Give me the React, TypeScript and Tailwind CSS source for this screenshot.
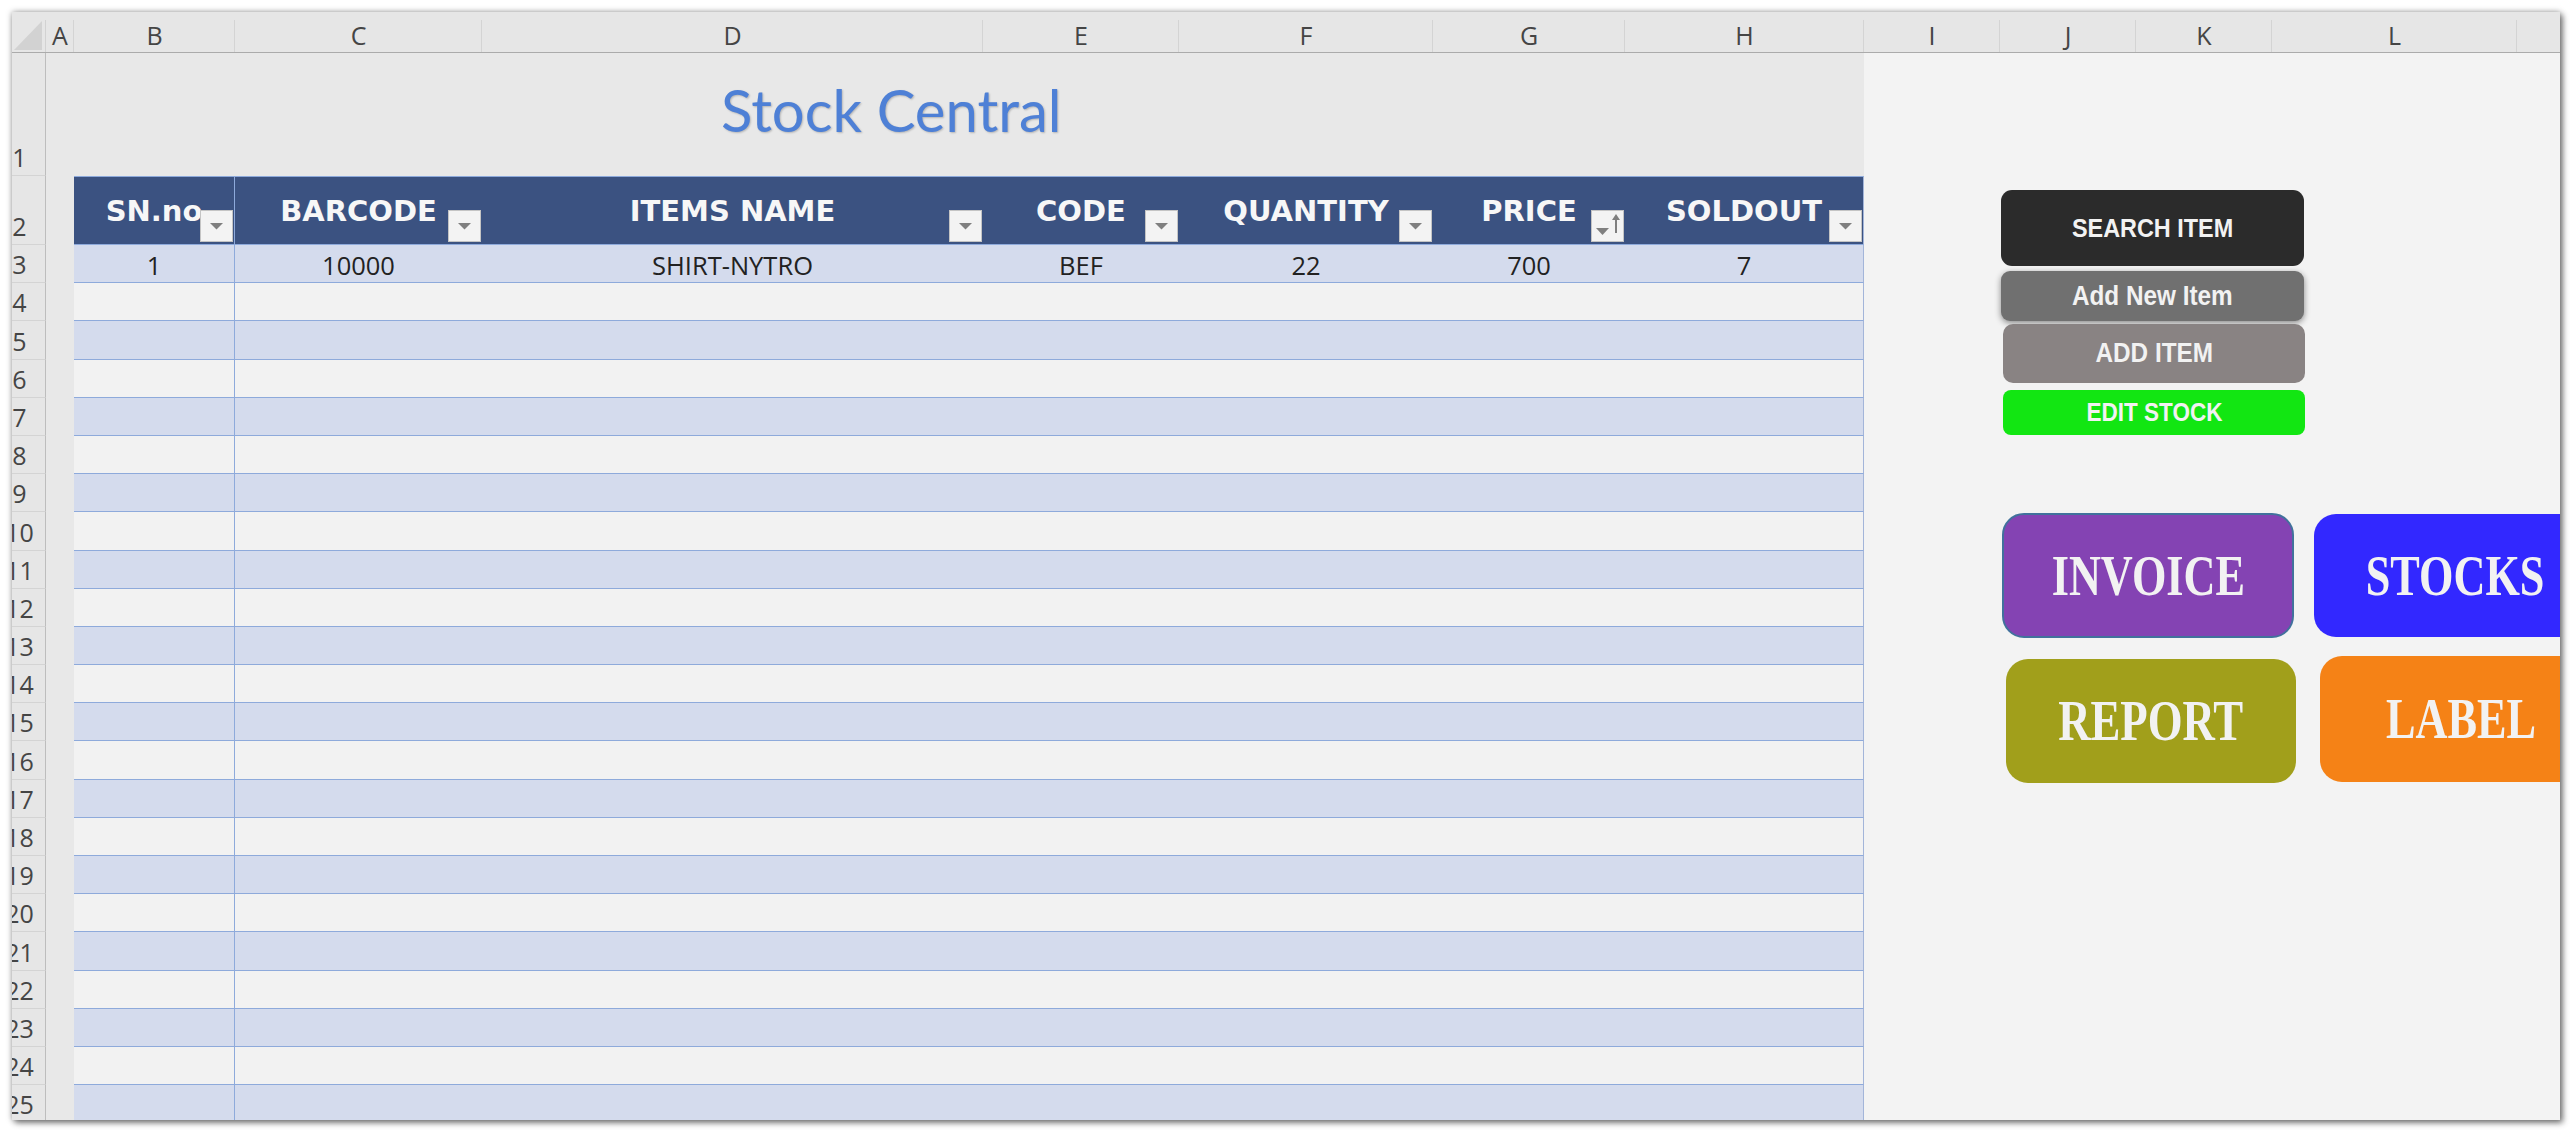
import React from 'react';

const headerBar: { label: string; w: string }[] = [
  { label: 'A', w: 'w-[28px]' },
  { label: 'B', w: 'w-[161px]' },
  { label: 'C', w: 'w-[247px]' },
  { label: 'D', w: 'w-[501px]' },
  { label: 'E', w: 'w-[196px]' },
  { label: 'F', w: 'w-[254px]' },
  { label: 'G', w: 'w-[192px]' },
  { label: 'H', w: 'w-[239px]' },
  { label: 'I', w: 'w-[136px]' },
  { label: 'J', w: 'w-[136px]' },
  { label: 'K', w: 'w-[136px]' },
  { label: 'L', w: 'w-[245px]' },
  { label: '', w: 'w-[80px]' },
];

const tableCols: { w: string; label: string; value: string; sort?: boolean }[] = [
  { w: 'w-[161px] border-r border-r-[#8eaadb]', label: 'SN.no', value: '1' },
  { w: 'w-[247px]', label: 'BARCODE', value: '10000' },
  { w: 'w-[501px]', label: 'ITEMS NAME', value: 'SHIRT-NYTRO' },
  { w: 'w-[196px]', label: 'CODE', value: 'BEF' },
  { w: 'w-[254px]', label: 'QUANTITY', value: '22' },
  { w: 'w-[192px]', label: 'PRICE', value: '700', sort: true },
  { w: 'w-[239px] border-r border-r-[#a3b5d9]', label: 'SOLDOUT', value: '7' },
];

function RowHdr({ n, h }: { n: number; h: string }) {
  return (
    <div
      className={`${h} w-[34px] shrink-0 overflow-hidden bg-[#e6e6e6] border-r border-r-[#bdbdbd] border-b border-b-[#d4d4d4] flex items-end`}
    >
      <div className="w-[53px] shrink-0 -ml-[19px] text-center text-[25px] leading-[34px] text-[#454545] font-['Open_Sans',sans-serif] pb-[1px]">
        {n}
      </div>
    </div>
  );
}

function Dropdown({ sort }: { sort?: boolean }) {
  return (
    <div className="absolute right-[1px] bottom-[2px] w-[33px] h-[32px] bg-[#f3f3f3] border border-[#c4c4c4]">
      <svg width="31" height="30" viewBox="0 0 31 30" className="block">
        {sort ? (
          <>
            <path d="M4 17 L17 17 L10.5 24 Z" fill="#7f7f7f" />
            <path d="M24 3 L20 9 L23 9 L23 22 L25 22 L25 9 L28 9 Z" fill="#7f7f7f" />
          </>
        ) : (
          <path d="M9 12 L22 12 L15.5 18.5 Z" fill="#7f7f7f" />
        )}
      </svg>
    </div>
  );
}

export default function App() {
  const bodyRows = Array.from({ length: 23 }, (_, i) => i + 3);
  return (
    <div className="w-[2573px] h-[1133px] bg-white overflow-hidden pt-[12px] pl-[12px]">
      <div className="w-[2548px] h-[1108px] overflow-hidden bg-[#f3f3f3] flex flex-col shadow-[0_0_6px_rgba(0,0,0,0.35),3px_3px_6px_rgba(0,0,0,0.45)]">
        {/* Column header bar */}
        <div className="h-[41px] shrink-0 flex bg-[#e6e6e6] border-b border-b-[#ababab]">
          <div className="relative w-[34px] shrink-0 h-full">
            <svg width="34" height="40" viewBox="0 0 34 40" className="block">
              <path d="M2 38 L30 38 L30 9 Z" fill="#d2d2d2" />
            </svg>
            <span className="absolute right-0 top-[8px] bottom-0 w-px bg-[#d2d2d2]" />
          </div>
          {headerBar.map((c, i) => (
            <div
              key={i}
              className={`${c.w} relative shrink-0 h-full flex items-center justify-center pt-[8px] text-[25px] text-[#454545] font-['Open_Sans',sans-serif]`}
            >
              {c.label}
              <span className="absolute right-0 top-[8px] bottom-0 w-px bg-[#d4d4d4]" />
            </div>
          ))}
        </div>

        {/* Sheet body */}
        <div className="flex flex-1 min-h-0">
          {/* Left: rows */}
          <div className="w-[1852px] shrink-0 flex flex-col">
            {/* Row 1 */}
            <div className="flex h-[123px] shrink-0">
              <RowHdr n={1} h="h-[123px]" />
              <div className="w-[1818px] shrink-0 bg-[#e8e8e8] pl-[675px] pt-[23px]">
                <div className="text-[58px] leading-[68px] text-[#4e80d6] font-['Lato',sans-serif] whitespace-nowrap [text-shadow:1px_1px_2px_rgba(0,0,0,0.22)]">
                  Stock Central
                </div>
              </div>
            </div>
            {/* Row 2: table header */}
            <div className="flex h-[69px] shrink-0">
              <RowHdr n={2} h="h-[69px]" />
              <div className="w-[28px] shrink-0 bg-[#e8e8e8]" />
              {tableCols.map((c) => (
                <div
                  key={c.label}
                  className={`${c.w} relative shrink-0 h-full bg-[#3b5281] border-t border-t-[#8eaadb] border-b border-b-[#8eaadb] pt-[17px] text-center text-[29px] leading-[34px] font-bold text-[#f7f7f7] font-['DejaVu_Sans',sans-serif] whitespace-nowrap`}
                >
                  {c.label}
                  <Dropdown sort={c.sort} />
                </div>
              ))}
            </div>
            {/* Body rows */}
            {bodyRows.map((n) => {
              const band = n % 2 === 1 ? 'bg-[#d4dbed]' : 'bg-[#f2f2f2]';
              return (
                <div key={n} className="flex h-[38.2px] shrink-0">
                  <RowHdr n={n} h="h-[38.2px]" />
                  <div className="w-[28px] shrink-0 bg-[#e8e8e8]" />
                  {tableCols.map((c) => (
                    <div
                      key={c.label}
                      className={`${c.w} ${band} shrink-0 h-full border-b border-b-[#8eaadb] flex items-center justify-center pt-[2px] text-[25.5px] leading-[34px] text-[#222] font-['Open_Sans',sans-serif] whitespace-nowrap`}
                    >
                      {n === 3 ? c.value : ''}
                    </div>
                  ))}
                </div>
              );
            })}
          </div>

          {/* Right: button area (columns I..M) */}
          <div className="w-[696px] shrink-0 bg-[#f3f3f3] pt-[137px] pl-[137px] flex flex-col items-start">
            <div className="w-[303px] h-[76px] shrink-0 rounded-[11px] bg-[#2b2b2b] flex items-center justify-center">
              <span className="inline-block scale-x-[0.9] text-[26px] font-bold text-[#f2f2f2] font-['Liberation_Sans',sans-serif] whitespace-nowrap">
                SEARCH ITEM
              </span>
            </div>
            <div className="mt-[5px] w-[303px] h-[50px] shrink-0 rounded-[9px] bg-[#707070] shadow-[0_2px_6px_rgba(0,0,0,0.45)] flex items-center justify-center">
              <span className="inline-block scale-x-[0.9] text-[27px] font-bold text-[#f2f2f2] font-['Liberation_Sans',sans-serif] whitespace-nowrap">
                Add New Item
              </span>
            </div>
            <div className="mt-[3px] ml-[2px] w-[302px] h-[59px] shrink-0 rounded-[10px] bg-[#898383] flex items-center justify-center">
              <span className="inline-block scale-x-[0.9] text-[27px] font-bold text-[#f2f2f2] font-['Liberation_Sans',sans-serif] whitespace-nowrap">
                ADD ITEM
              </span>
            </div>
            <div className="mt-[7px] ml-[2px] w-[302px] h-[45px] shrink-0 rounded-[8px] bg-[#12e612] flex items-center justify-center">
              <span className="inline-block scale-x-[0.9] text-[25px] font-bold text-[#f2f2f2] font-['Liberation_Sans',sans-serif] whitespace-nowrap">
                EDIT STOCK
              </span>
            </div>

            <div className="mt-[78px] flex items-start">
              <div className="ml-[1px] w-[292px] h-[125px] shrink-0 rounded-[22px] bg-[#8443b3] border-2 border-[#41719c] flex items-center justify-center">
                <span className="inline-block scale-x-[0.79] text-[56px] leading-[64px] font-bold text-[#f2f2f2] font-['Liberation_Serif',serif] whitespace-nowrap">
                  INVOICE
                </span>
              </div>
              <div className="ml-[20px] mt-[1px] w-[282px] h-[123px] shrink-0 rounded-[22px] bg-[#3228ff] flex items-center justify-center">
                <span className="inline-block scale-x-[0.79] text-[56px] leading-[64px] font-bold text-[#f2f2f2] font-['Liberation_Serif',serif] whitespace-nowrap">
                  STOCKS
                </span>
              </div>
            </div>
            <div className="mt-[18px] flex items-start">
              <div className="ml-[5px] mt-[3px] w-[290px] h-[124px] shrink-0 rounded-[22px] bg-[#a19f1b] flex items-center justify-center">
                <span className="inline-block scale-x-[0.8] text-[56px] leading-[64px] font-bold text-[#f2f2f2] font-['Liberation_Serif',serif] whitespace-nowrap">
                  REPORT
                </span>
              </div>
              <div className="ml-[24px] w-[282px] h-[126px] shrink-0 rounded-[22px] bg-[#f58216] flex items-center justify-center">
                <span className="inline-block scale-x-[0.79] text-[56px] leading-[64px] font-bold text-[#f2f2f2] font-['Liberation_Serif',serif] whitespace-nowrap">
                  LABEL
                </span>
              </div>
            </div>
          </div>
        </div>
      </div>
    </div>
  );
}
